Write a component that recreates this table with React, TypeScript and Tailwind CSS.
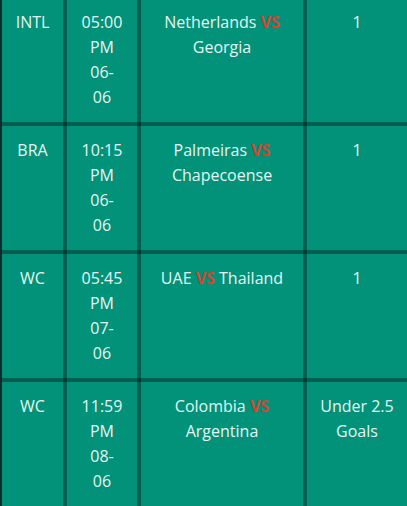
type Match = {
  league: string
  time: string[]
  home: string
  away: string
  tip: string[]
}

const matches: Match[] = [
  { league: 'INTL', time: ['05:00', 'PM', '06-', '06'], home: 'Netherlands', away: 'Georgia', tip: ['1'] },
  { league: 'BRA', time: ['10:15', 'PM', '06-', '06'], home: 'Palmeiras', away: 'Chapecoense', tip: ['1'] },
  { league: 'WC', time: ['05:45', 'PM', '07-', '06'], home: 'UAE', away: 'Thailand', tip: ['1'] },
  { league: 'WC', time: ['11:59', 'PM', '08-', '06'], home: 'Colombia', away: 'Argentina', tip: ['Under 2.5', 'Goals'] },
]

// cells drop 4px into the row's bottom border so the crossings come out darker
const cell = 'shrink-0 -mb-1 pb-4 pt-3 px-1 text-center border-r-4 border-black/35'

export default function App() {
  return (
    <div
      className="w-[407px] h-[506px] overflow-hidden bg-[#02927a] text-[#e3f6f1] text-[16px] leading-[25px]"
      style={{ fontFamily: '"Open Sans", "Noto Sans", sans-serif' }}
    >
      <div className="w-[420px] -mt-0.5 border-l-2 border-[#07302a]">
        {matches.map((m, i) => (
          <div key={i} className="flex border-b-4 border-black/35">
            <div className={`${cell} w-[65px]`}>{m.league}</div>
            <div className={`${cell} w-[74px]`}>
              {m.time.map((t, j) => (
                <div key={j}>{t}</div>
              ))}
            </div>
            <div className={`${cell} w-[166px]`}>
              {m.home} <span className="text-[#cf4530] font-bold">VS</span> {m.away}
            </div>
            <div className={`${cell} w-[104px]`}>
              {m.tip.map((t, j) => (
                <div key={j}>{t}</div>
              ))}
            </div>
          </div>
        ))}
      </div>
    </div>
  )
}
